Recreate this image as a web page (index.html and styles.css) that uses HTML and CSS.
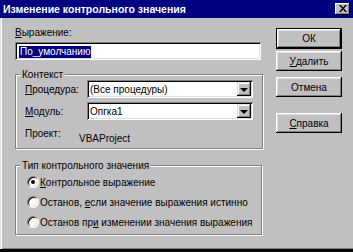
FILE: index.html
```html
<!DOCTYPE html>
<html lang="ru">
<head>
    <meta charset="UTF-8">
    <meta name="viewport" content="width=device-width, initial-scale=1.0">
    <title>Изменение контрольного значения</title>
    <link rel="stylesheet" href="styles.css">
</head>
<body>

    <div class="window">
        <div class="titlebar">
            <span class="title">Изменение контрольного значения</span>
            <span class="close-btn">
                <svg width="8" height="7" viewBox="0 0 8 7">
                    <path d="M0 0h2l2 2.5L6 0h2L5 3.5 8 7H6L4 4.5 2 7H0l3-3.5z" fill="#000"/>
                </svg>
            </span>
        </div>

        <div class="client">
            <div class="main">
                <label class="field-label"><u>В</u>ыражение:</label>
                <div class="textbox"><span class="selected">По_умолчанию</span></div>

                <fieldset class="group context">
                    <legend>Контекст</legend>
                    <div class="row first">
                        <label class="row-label"><u>П</u>роцедура:</label>
                        <div class="combo">
                            <span class="combo-text">(Все процедуры)</span>
                            <span class="drop-btn"><span class="arrow"></span></span>
                        </div>
                    </div>
                    <div class="row">
                        <label class="row-label"><u>М</u>одуль:</label>
                        <div class="combo">
                            <span class="combo-text">Опгка1</span>
                            <span class="drop-btn"><span class="arrow"></span></span>
                        </div>
                    </div>
                    <div class="row project">
                        <span class="project-label">Проект:</span>
                        <span class="project-value">VBAProject</span>
                    </div>
                </fieldset>

                <fieldset class="group watch-type">
                    <legend>Тип контрольного значения</legend>
                    <div class="radio checked">
                        <span class="radio-box"></span>
                        <span><u>К</u>онтрольное выражение</span>
                    </div>
                    <div class="radio">
                        <span class="radio-box"></span>
                        <span>Останов, <u>е</u>сли значение выражения истинно</span>
                    </div>
                    <div class="radio">
                        <span class="radio-box"></span>
                        <span>Останов пр<u>и</u> изменении значения выражения</span>
                    </div>
                </fieldset>
            </div>

            <div class="buttons">
                <div class="btn default">ОК</div>
                <div class="btn delete"><u>У</u>далить</div>
                <div class="btn cancel">Отмена</div>
                <div class="btn help"><u>С</u>правка</div>
            </div>
        </div>
    </div>

</body>
</html>
```

FILE: styles.css
```css
body {
    margin: 0;
    padding: 0;
    font-family: 'Liberation Sans', Arial, sans-serif;
    font-size: 10px;
    line-height: 13px;
    color: #000;
    background-color: #c0c0c0;
    white-space: nowrap;
}
u {
    text-decoration: underline;
    text-underline-offset: 1px;
}
.window {
    width: 353px;
    height: 252px;
    background-color: #c0c0c0;
    overflow: hidden;
}
.titlebar {
    height: 18px;
    background-color: #000080;
    display: flex;
    justify-content: space-between;
    align-items: flex-start;
    padding: 0 3px 0 3px;
    box-sizing: border-box;
}
.title {
    color: #fff;
    font-size: 10.5px;
    font-weight: bold;
    line-height: 16px;
    padding-top: 1px;
}
.close-btn {
    width: 15px;
    height: 12px;
    margin-top: 3px;
    background-color: #c0c0c0;
    display: flex;
    align-items: center;
    justify-content: center;
    box-shadow: inset -1px -1px #000, inset 1px 1px #fff, inset -2px -2px #808080;
}
.close-btn svg {
    display: block;
    margin-top: -1px;
}
.client {
    height: 234px;
    display: flex;
    box-sizing: border-box;
    border-bottom: 3px solid #000;
    box-shadow: inset 1px 0 #dfdfdf, inset 2px 0 #fff, inset 0 -1px #808080;
}
.main {
    width: 276px;
    padding: 8px 0 0 15px;
    box-sizing: border-box;
    display: flex;
    flex-direction: column;
}
.field-label {
    display: block;
}
.textbox {
    width: 246px;
    height: 18px;
    margin-top: 3px;
    padding: 3px 0 0 4px;
    box-sizing: border-box;
    background-color: #fff;
    box-shadow: inset 1px 1px #808080, inset -1px -1px #fff, inset 2px 2px #000, inset -2px -2px #dfdfdf;
}
.selected {
    display: inline-block;
    line-height: 12px;
    padding: 0 1px;
    background-color: #000080;
    color: #fff;
}
.group {
    width: 244px;
    margin: 0;
    padding: 0 9px 0 9px;
    box-sizing: border-box;
    border: 1px solid #808080;
    box-shadow: inset 1px 1px #fff, 1px 1px #fff;
}
.group legend {
    margin-left: -5px;
    padding: 0 2px;
    background-color: #c0c0c0;
    line-height: 13px;
}
.context {
    height: 81px;
    margin-top: 8px;
}
.watch-type {
    height: 76px;
    margin-top: 10px;
}
.row {
    display: flex;
    align-items: center;
    margin-top: 4px;
}
.row.first {
    margin-top: -1px;
}
.row-label {
    width: 62px;
}
.combo {
    width: 166px;
    height: 18px;
    box-sizing: border-box;
    padding: 2px;
    display: flex;
    align-items: center;
    background-color: #fff;
    box-shadow: inset 1px 1px #808080, inset -1px -1px #fff, inset 2px 2px #000, inset -2px -2px #dfdfdf;
}
.combo-text {
    flex: 1;
    padding-left: 1px;
}
.drop-btn {
    width: 14px;
    height: 14px;
    background-color: #c0c0c0;
    display: flex;
    align-items: center;
    justify-content: center;
    box-shadow: inset -1px -1px #000, inset 1px 1px #dfdfdf, inset -2px -2px #808080, inset 2px 2px #fff;
}
.arrow {
    width: 0;
    height: 0;
    border-left: 4px solid transparent;
    border-right: 4px solid transparent;
    border-top: 4px solid #000;
    margin-top: 1px;
}
.row.project {
    align-items: flex-start;
    margin-top: 7px;
}
.project-label {
    width: 54px;
}
.project-value {
    margin-top: 5px;
}
.radio {
    height: 20px;
    display: flex;
    align-items: center;
}
.radio-box {
    width: 12px;
    height: 12px;
    margin: 0 1px 0 2px;
    box-sizing: border-box;
    border-radius: 50%;
    background-color: #fff;
    border: 1px solid;
    border-color: #808080 #fff #fff #808080;
    box-shadow: inset 1px 1px #000, inset -1px -1px #dfdfdf;
    display: flex;
    align-items: center;
    justify-content: center;
}
.radio.checked .radio-box::after {
    content: "";
    width: 4px;
    height: 4px;
    border-radius: 50%;
    background-color: #000;
}
.buttons {
    width: 66px;
    padding-top: 10px;
    display: flex;
    flex-direction: column;
}
.btn {
    height: 20px;
    box-sizing: border-box;
    display: flex;
    align-items: center;
    justify-content: center;
    background-color: #c0c0c0;
    box-shadow: inset -1px -1px #000, inset 1px 1px #fff, inset -2px -2px #808080, inset 2px 2px #dfdfdf;
}
.btn.default {
    height: 21px;
    border: 1px solid #000;
}
.btn.delete {
    margin-top: 2px;
}
.btn.cancel {
    margin-top: 6px;
}
.btn.help {
    margin-top: 16px;
}
```
